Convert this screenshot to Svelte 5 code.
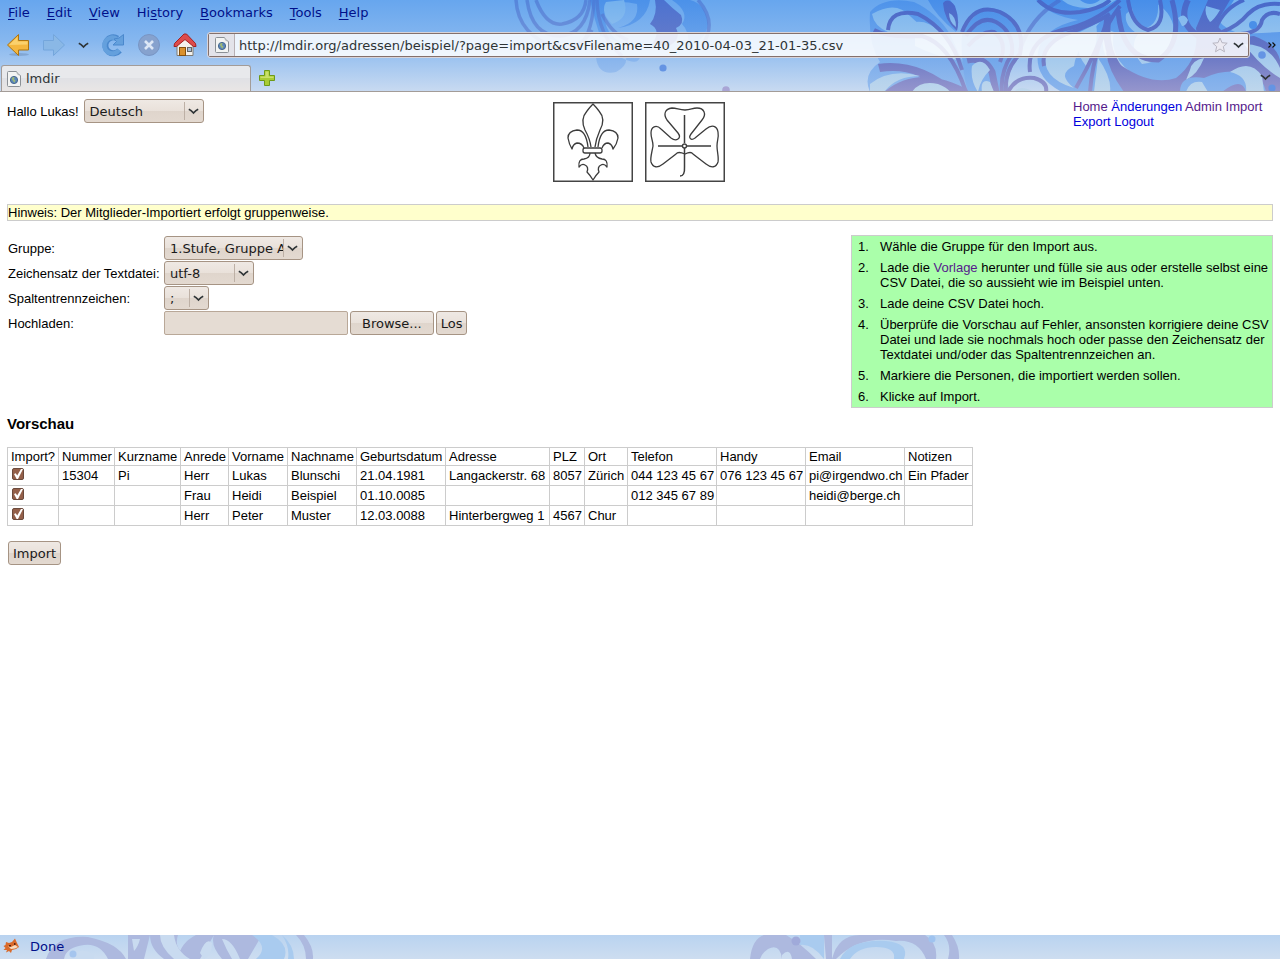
<script>
  const url = 'http://lmdir.org/adressen/beispiel/?page=import&csvFilename=40_2010-04-03_21-01-35.csv'

  // [before, access key, after]
  const menus = [
    ['', 'F', 'ile'],
    ['', 'E', 'dit'],
    ['', 'V', 'iew'],
    ['Hi', 's', 'tory'],
    ['', 'B', 'ookmarks'],
    ['', 'T', 'ools'],
    ['', 'H', 'elp'],
  ]

  const links = [
    { text: 'Home', visited: true },
    { text: 'Änderungen', visited: false },
    { text: 'Admin', visited: true },
    { text: 'Import', visited: true },
    { text: 'Export', visited: false },
    { text: 'Logout', visited: false },
  ]

  const columns = [
    { name: 'Import?', width: 51 },
    { name: 'Nummer', width: 56 },
    { name: 'Kurzname', width: 66 },
    { name: 'Anrede', width: 48 },
    { name: 'Vorname', width: 59 },
    { name: 'Nachname', width: 69 },
    { name: 'Geburtsdatum', width: 89 },
    { name: 'Adresse', width: 104 },
    { name: 'PLZ', width: 35 },
    { name: 'Ort', width: 43 },
    { name: 'Telefon', width: 89 },
    { name: 'Handy', width: 89 },
    { name: 'Email', width: 99 },
    { name: 'Notizen', width: 68 },
  ]
  const tableWidth = columns.reduce((n, c) => n + c.width, 1)

  let address = $state(url)
  let language = $state('Deutsch')
  let group = $state('1.Stufe, Gruppe A')
  let charset = $state('utf-8')
  let separator = $state(';')
  let fileName = $state('')
  let fileInput

  let people = $state([
    { on: true, cells: ['15304', 'Pi', 'Herr', 'Lukas', 'Blunschi', '21.04.1981', 'Langackerstr. 68', '8057', 'Zürich', '044 123 45 67', '076 123 45 67', 'pi@irgendwo.ch', 'Ein Pfader'] },
    { on: true, cells: ['', '', 'Frau', 'Heidi', 'Beispiel', '01.10.0085', '', '', '', '012 345 67 89', '', 'heidi@berge.ch', ''] },
    { on: true, cells: ['', '', 'Herr', 'Peter', 'Muster', '12.03.0088', 'Hinterbergweg 1', '4567', 'Chur', '', '', '', ''] },
  ])

  function pickFile() {
    fileName = fileInput.files[0]?.name ?? ''
  }
</script>

{#snippet chevron()}
  <svg class="chevron" width="11" height="7" viewBox="0 0 11 7" aria-hidden="true">
    <path d="M0.800 1.200Q3 2.200 5.500 5Q8 2.200 10.200 1.200" fill="none" stroke="#2e3436" stroke-width="1.700" />
  </svg>
{/snippet}

{#snippet pageIcon()}
  <svg width="14" height="16" viewBox="0 0 14 16" aria-hidden="true">
    <path d="M1.5 0.5H9.5L13.5 4.5V14.5Q13.5 15.5 12.5 15.5H1.5Q0.5 15.5 0.5 14.5V1.5Q0.5 0.5 1.5 0.5Z" fill="#f3f4f3" stroke="#8b9096" />
    <path d="M9.5 0.5Q9.8 4 13.5 4.5" fill="#fff" stroke="#a7abaf" />
    <circle cx="7" cy="9" r="3.6" fill="#5b87bd" stroke="#47688f" />
    <path d="M4.6 7.4Q6 5.6 7.6 6.2L7 8.2L8.6 9.4L7.4 11.8L5.8 9.8Z" fill="#9cb778" />
  </svg>
{/snippet}

<div class="browser">
  <header class="chrome">
    <svg class="ornament" viewBox="0 0 1280 92" preserveAspectRatio="xMaxYMin slice" aria-hidden="true">
      <defs>
        <linearGradient id="violet" gradientUnits="userSpaceOnUse" x1="0" y1="0" x2="0" y2="92">
          <stop offset="0" stop-color="#4769cb" />
          <stop offset="0.55" stop-color="#6474c4" />
          <stop offset="1" stop-color="#9696cd" />
        </linearGradient>
        <linearGradient id="blue" gradientUnits="userSpaceOnUse" x1="0" y1="0" x2="0" y2="92">
          <stop offset="0" stop-color="#478ee9" />
          <stop offset="1" stop-color="#8bb5ec" />
        </linearGradient>
        <linearGradient id="pale" gradientUnits="userSpaceOnUse" x1="0" y1="0" x2="0" y2="92">
          <stop offset="0" stop-color="#76b3ef" />
          <stop offset="1" stop-color="#bfd7ec" />
        </linearGradient>
      </defs>

      <!-- middle flower -->
      <g opacity="0.85">
        <path d="M590 0H650Q646 24 618 28Q640 22 637 4Q620 0 606 4Q600 30 620 42L600 36Q594 18 590 0Z" fill="url(#blue)" />
        <path d="M624 0Q630 18 612 24Q600 12 606 2Z" fill="url(#pale)" />
        <path d="M655 0H664Q672 8 681 15Q685 24 676 28Q682 40 668 46L652 44Q662 30 650 24Q658 14 655 0Z" fill="url(#violet)" />
        <path d="M672 0H690Q706 4 708 24Q706 40 688 46Q690 32 682 24Q690 12 672 0Z" fill="url(#blue)" />
        <circle cx="675" cy="19" r="4.5" fill="url(#violet)" />
        <path d="M596 57Q598 76 616 72Q628 66 626 56L640 57Q638 66 622 58Z" fill="url(#blue)" opacity="0.6" />
        <g fill="none" stroke="url(#violet)" stroke-width="3.5" opacity="0.6">
          <path d="M516 0Q518 36 558 48Q582 48 592 30" />
          <path d="M527 0Q532 36 560 36Q586 34 590 0" />
          <path d="M536 0Q546 26 562 24Q584 20 586 0" />
          <path d="M594 0Q592 40 574 50" />
          <path d="M597 0Q598 36 622 56M602 14Q612 34 628 40" />
          <path d="M698 0Q718 22 702 46" />
        </g>
      </g>
      <circle cx="663" cy="68" r="3.6" fill="#6594e3" />
      <circle cx="726" cy="90" r="3.8" fill="#a9a5d5" />

      <!-- side flower -->
      <path d="M870 12Q884 -4 914 2Q936 12 950 34L962 60Q978 92 966 92H870Q862 74 880 62Q868 44 870 12Z" fill="url(#blue)" opacity="0.8" />
      <path d="M872 14Q896 0 910 16Q922 28 934 32H888Q874 26 872 14ZM915 22Q938 18 958 60Q940 58 915 46Z" fill="url(#pale)" />
      <path d="M878 64Q920 58 958 92H940Q916 66 880 72ZM884 92Q920 62 972 92Z" fill="url(#violet)" />
      <path d="M912 92Q920 80 938 84Q948 88 950 92ZM870 84Q890 68 920 76Q896 76 884 92H870Z" fill="url(#pale)" />
      <path d="M928 0Q936 -6 950 0Q962 14 956 32Q936 16 928 0Z" fill="url(#blue)" />
      <path d="M943 3Q948 -3 955 6Q960 20 957 31Q944 20 943 3Z" fill="url(#violet)" />
      <path d="M949 13Q956 16 956 27Q949 22 949 13Z" fill="url(#pale)" />
      <path d="M962 34Q980 0 1004 12Q1028 28 1016 60Q1004 80 1010 92H968Q960 64 962 34Z" fill="url(#blue)" />
      <g fill="none" stroke="url(#violet)" stroke-width="4">
        <path d="M888 30Q890 8 918 14Q950 30 962 70" />
        <path d="M874 30Q888 38 922 36Q950 44 966 92" />
        <path d="M962 32Q974 2 1000 12Q1026 24 1020 54Q1004 70 1006 92" />
        <path d="M966 36Q980 14 996 22Q1014 32 1012 54Q1000 72 1002 92" />
        <path d="M968 46Q982 30 994 32Q1008 42 1000 62" />
        <path d="M967 60Q984 56 992 72L996 92" stroke-width="7" />
        <path d="M1008 92Q1016 76 1034 78Q1048 82 1046 92" />
      </g>
      <path d="M972 66Q982 56 990 70Q980 80 978 92Q970 80 972 66ZM982 92Q980 78 990 82L994 92ZM1014 92Q1020 84 1034 92Z" fill="url(#pale)" />

      <!-- corner flower -->
      <path d="M1036 0H1280V92H1062Q1034 78 1038 52Q1042 28 1078 20Q1050 16 1036 0Z" fill="url(#blue)" />
      <path d="M1046 0H1062Q1076 12 1106 6L1116 0H1100Q1090 8 1080 0ZM1046 52Q1056 36 1080 32L1100 22Q1076 48 1074 66Q1056 74 1074 88Q1040 78 1046 52ZM1104 28L1114 32Q1108 58 1136 76L1128 80Q1096 60 1104 28Z" fill="url(#pale)" />
      <path d="M1098 58Q1112 78 1110 92H1094ZM1078 40Q1090 34 1096 24Q1100 46 1086 66Q1076 54 1078 40Z" fill="url(#pale)" />
      <path d="M1208 0H1230L1216 24Q1226 40 1254 36Q1276 44 1280 60V92H1200Q1160 96 1124 92Q1108 70 1106 52L1122 66Q1152 86 1176 78Q1200 60 1196 28Z" fill="url(#violet)" />
      <path d="M1234 0H1280V32L1240 34Q1224 28 1220 22Z" fill="url(#pale)" />
      <path d="M1126 14Q1136 4 1150 0Q1172 10 1174 30Q1168 62 1142 64Q1128 48 1138 34Q1124 26 1126 14Z" fill="url(#pale)" />
      <path d="M1132 0H1158Q1160 26 1144 28Q1130 16 1132 0Z" fill="url(#blue)" />
      <g fill="none" stroke="url(#violet)" stroke-width="4">
        <path d="M1038 0Q1054 16 1080 12Q1102 8 1110 0" />
        <path d="M1020 50Q1030 18 1060 0" opacity="0.6" />
        <path d="M1030 72Q1026 40 1062 30Q1094 24 1120 0" />
        <path d="M1044 66Q1040 46 1066 34Q1094 24 1110 14" />
        <path d="M1090 92Q1094 40 1120 6M1076 88Q1098 50 1108 18" />
        <path d="M1108 16Q1100 70 1150 92" stroke-width="7" />
        <path d="M1118 10Q1122 60 1158 60Q1184 44 1172 0" stroke-width="5" />
        <path d="M1128 0Q1132 26 1148 30Q1166 26 1160 0" />
        <path d="M1216 28Q1224 8 1244 0M1222 32Q1238 26 1248 14Q1260 2 1280 4M1228 34Q1260 36 1262 20Q1268 10 1280 14" />
        <path d="M1188 0Q1176 24 1202 38" stroke-width="6" />
      </g>
      <path d="M1178 18Q1184 12 1188 20Q1186 26 1182 26ZM1206 6L1220 10Q1214 20 1210 22Q1204 14 1206 6ZM1190 70Q1192 60 1204 58Q1198 74 1186 80Z" fill="url(#pale)" />
      <path d="M1180 92Q1180 74 1204 78Q1222 70 1238 72Q1260 66 1266 92H1246Q1242 76 1222 92Z" fill="url(#blue)" />
      <path d="M1230 72Q1250 58 1262 76L1264 92H1246Q1248 76 1230 72ZM1186 92Q1190 80 1202 82L1208 92ZM1244 44Q1270 44 1280 68V78Q1260 66 1244 44Z" fill="url(#pale)" />
      <circle cx="1262" cy="55" r="3.8" fill="#6494e4" />
      <circle cx="1272" cy="88" r="3.6" fill="#6494e4" />
      <circle cx="1253" cy="25" r="4" fill="#4a8fe8" />
    </svg>

    <nav class="menubar" aria-label="Menu">
      {#each menus as [before, key, after]}
        <button class="menu">{before}<u>{key}</u>{after}</button>
      {/each}
    </nav>

    <div class="toolbar">
      <button class="tool" aria-label="Back">
        <svg width="24" height="24" viewBox="0 0 24 24">
          <ellipse cx="13" cy="21.500" rx="10" ry="1.500" fill="#6b8cb8" opacity="0.5" />
          <path d="M1.500 12L12.500 1.500V7.500H22.500V17H12.500V22.500Z" fill="#f4b73f" stroke="#ad7411" stroke-linejoin="round" />
          <path d="M3 12L11.500 4V8.500H21.500V11.500Z" fill="#fbd779" opacity="0.8" />
        </svg>
      </button>
      <button class="tool" aria-label="Forward">
        <svg width="24" height="24" viewBox="0 0 24 24">
          <path d="M22.500 12L11.500 1.500V7.500H1.500V17H11.500V22.500Z" fill="#8ab8e6" stroke="#74a6dc" stroke-linejoin="round" />
        </svg>
      </button>
      <button class="tool narrow" aria-label="Recent pages">{@render chevron()}</button>
      <button class="tool" aria-label="Reload">
        <svg width="24" height="24" viewBox="0 0 24 24">
          <path d="M18.500 17.500A8 8 0 1 1 16.500 5.500" fill="none" stroke="#4a88cd" stroke-width="6" />
          <path d="M18 17A8 8 0 1 1 16 6" fill="none" stroke="#64a0dd" stroke-width="4.500" />
          <path d="M22.500 1.500V12H12L15.500 8.500L13 6L18 5Z" fill="#64a0dd" stroke="#4a88cd" stroke-linejoin="round" />
        </svg>
      </button>
      <button class="tool" aria-label="Stop">
        <svg width="24" height="24" viewBox="0 0 24 24">
          <circle cx="12" cy="12" r="10.500" fill="#86a2ce" stroke="#7895c4" />
          <path d="M8 8L16 16M16 8L8 16" stroke="#dce7f6" stroke-width="2.600" />
        </svg>
      </button>
      <button class="tool" aria-label="Home">
        <svg width="24" height="24" viewBox="0 0 24 24">
          <path d="M4 12L12 4L20 12V22.500H4Z" fill="#f3f1ec" stroke="#7d7b74" />
          <rect x="6.500" y="14.500" width="6" height="8" fill="#d9912e" stroke="#85500d" />
          <rect x="14.500" y="14.500" width="4" height="4" fill="#a9bfd6" stroke="#666" />
          <path d="M1 13.500L1.500 10.500L11 1H13.500L22.500 10.500L23 13.500H20.500L12 6.500L3.500 13.500Z" fill="#dd4b4b" stroke="#a52020" stroke-linejoin="round" />
        </svg>
      </button>
      <div class="location">
        <span class="site">{@render pageIcon()}</span>
        <input class="address" aria-label="Location" bind:value={address} />
        <button class="inbar" aria-label="Bookmark this page">
          <svg width="16" height="16" viewBox="0 0 16 16">
            <path d="M8 1L10 5.700L15.200 6.200L11.300 9.600L12.500 14.800L8 12L3.500 14.800L4.700 9.600L0.800 6.200L6 5.700Z" fill="#eceaf2" stroke="#b8b6c2" stroke-linejoin="round" />
          </svg>
        </button>
        <button class="inbar" aria-label="Show history">{@render chevron()}</button>
      </div>
      <button class="more" aria-label="More tools">
        <svg width="8" height="6" viewBox="0 0 8 6">
          <path d="M0.500 0.500L3 3L0.500 5.500M4.500 0.500L7 3L4.500 5.500" fill="none" stroke="#111" stroke-width="1.200" />
        </svg>
      </button>
    </div>

    <div class="tabs">
      <button class="tab">{@render pageIcon()}<span>lmdir</span></button>
      <button class="newtab" aria-label="New tab">
        <svg width="16" height="16" viewBox="0 0 16 16">
          <path d="M5.500 0.500H10.500V5.500H15.500V10.500H10.500V15.500H5.500V10.500H0.500V5.500H5.500Z" fill="#a9cc35" stroke="#6d9a18" stroke-linejoin="round" />
          <path d="M6.500 1.500H9.500V6.500H14.500V8H1.500V6.500H6.500Z" fill="#c9e069" />
        </svg>
      </button>
      <button class="alltabs" aria-label="List all tabs">{@render chevron()}</button>
    </div>
  </header>

  <main class="page">
    <div class="top">
      <div class="hello">
        <label for="language">Hallo Lukas!</label>
        <span class="select">
          <select id="language" class="w-language" bind:value={language}>
            <option>Deutsch</option>
          </select>
          <span class="arrow">{@render chevron()}</span>
        </span>
      </div>
      <div class="logos">
        <svg width="80" height="80" viewBox="0 0 80 80" role="img" aria-label="Lilie">
          <rect x="0.750" y="0.750" width="78.500" height="78.500" fill="#fff" stroke="#444" stroke-width="1.500" />
          <g fill="none" stroke="#3c3c3c" stroke-width="1.300" stroke-linejoin="round">
            <path d="M38 45Q37 37 32 28Q27 17 34 9Q37 5 40 2Q43 5 46 9Q53 17 47 28Q43 37 42 45" />
            <path d="M35 45Q33 28 24 28Q15 29 15 36Q16 42 19 47Q20 42 24 41Q29 41 31 46" />
            <path d="M45 45Q47 28 56 28Q65 29 65 36Q64 42 60 47Q59 42 55 41Q51 41 49 46" />
            <path d="M32 46H47Q49 46 49 48V49Q49 51 47 51H32Q30 51 30 49V48Q30 46 32 46Z" />
            <path d="M37 51Q37 56 31 57Q25 57 26 65Q29 61 32 63Q36 65 34 70Q37 73 40 78Q43 73 46 70Q44 65 48 63Q51 61 54 65Q55 57 49 57Q43 56 42 51" />
          </g>
        </svg>
        <svg width="80" height="80" viewBox="0 0 80 80" role="img" aria-label="Kleeblatt">
          <rect x="0.750" y="0.750" width="78.500" height="78.500" fill="#fff" stroke="#444" stroke-width="1.500" />
          <g fill="none" stroke="#3c3c3c" stroke-width="1.300">
            <path d="M33 37Q30 39 26 36L16 27C11 22 6 25 6 31C6 37 8 38 8 44C7 50 5 56 6 60C8 66 13 66 18 62L31 52Q33 49 40 52Q46 49 48 52L61 62C66 66 71 66 73 60C74 55 72 50 72 44C72 38 74 36 73 30C72 24 67 22 61 27L50 36C46 39 43 36 46 32L57 18C62 12 59 6 52 6C47 6 46 8 40 8C34 8 32 6 27 6C20 7 18 12 22 18L33 31Q36 35 33 37Z" />
            <path d="M39.500 13V41M13 44H37M42 44H66M39.500 46V65Q40 74 35 74" stroke-width="1.500" />
            <circle cx="39.500" cy="44" r="2" />
          </g>
        </svg>
      </div>
      <nav class="links" aria-label="Navigation">
        {#each links as link}
          <a href="#top" class:visited={link.visited}>{link.text}</a>{' '}
        {/each}
      </nav>
    </div>

    <p class="notice">Hinweis: Der Mitglieder-Importiert erfolgt gruppenweise.</p>

    <div class="setup">
      <form class="settings" onsubmit={(e) => e.preventDefault()}>
        <label for="group">Gruppe:</label>
        <span class="select">
          <select id="group" class="w-group" bind:value={group}>
            <option>1.Stufe, Gruppe A</option>
          </select>
          <span class="arrow">{@render chevron()}</span>
        </span>

        <label for="charset">Zeichensatz der Textdatei:</label>
        <span class="select">
          <select id="charset" class="w-charset" bind:value={charset}>
            <option>utf-8</option>
          </select>
          <span class="arrow">{@render chevron()}</span>
        </span>

        <label for="separator">Spaltentrennzeichen:</label>
        <span class="select">
          <select id="separator" class="w-separator" bind:value={separator}>
            <option>;</option>
          </select>
          <span class="arrow">{@render chevron()}</span>
        </span>

        <label for="filename">Hochladen:</label>
        <span class="upload">
          <input id="filename" class="filename" readonly value={fileName} />
          <input type="file" hidden bind:this={fileInput} onchange={pickFile} />
          <button type="button" class="btn wide" onclick={() => fileInput.click()}>Browse...</button>
          <button class="btn">Los</button>
        </span>
      </form>

      <ol class="steps">
        <li><span>Wähle die Gruppe für den Import aus.</span></li>
        <li><span>Lade die <a href="#vorlage" class="visited">Vorlage</a> herunter und fülle sie aus oder erstelle selbst eine CSV Datei, die so aussieht wie im Beispiel unten.</span></li>
        <li><span>Lade deine CSV Datei hoch.</span></li>
        <li><span>Überprüfe die Vorschau auf Fehler, ansonsten korrigiere deine CSV Datei und lade sie nochmals hoch oder passe den Zeichensatz der Textdatei und/oder das Spaltentrennzeichen an.</span></li>
        <li><span>Markiere die Personen, die importiert werden sollen.</span></li>
        <li><span>Klicke auf Import.</span></li>
      </ol>
    </div>

    <h2>Vorschau</h2>

    <table style="width: {tableWidth}px">
      <thead>
        <tr>
          {#each columns as column}
            <th style="width: {column.width}px">{column.name}</th>
          {/each}
        </tr>
      </thead>
      <tbody>
        {#each people as person}
          <tr>
            <td class="tick"><input type="checkbox" aria-label="Import?" bind:checked={person.on} /></td>
            {#each person.cells as cell}
              <td>{cell}</td>
            {/each}
          </tr>
        {/each}
      </tbody>
    </table>

    <div class="actions">
      <button class="btn">Import</button>
    </div>
  </main>

  <footer class="status">
    <svg class="ornament" viewBox="0 0 1280 24" preserveAspectRatio="xMinYMin slice" aria-hidden="true">
      <path d="M46 24Q54 0 88 2Q118 8 126 24H108Q100 8 84 10Q66 12 64 24ZM128 0H150L144 24H128ZM150 0H178Q172 18 196 22L192 24H164Q150 14 150 0ZM178 24Q180 8 196 0H214L200 24ZM214 0H262L248 24H222Q210 10 214 0ZM296 0H304Q314 12 313 24H306Q306 10 296 0Z" fill="#adb9df" />
      <path d="M252 0H272Q290 10 284 24H256Q270 12 252 0ZM282 0Q294 10 294 24H288Q290 12 282 0Z" fill="#a9cbef" />
      <path d="M132 4H140Q138 12 134 16ZM160 0H174Q176 16 190 24H174Q160 12 160 0ZM200 18Q206 2 212 8Q212 20 204 24ZM222 4Q232 4 240 24H232Q226 14 222 4ZM70 24Q78 10 94 20V24Z" fill="#c9dbf0" />
      <circle cx="73" cy="19" r="3.500" fill="#a5c5ee" />
      <path d="M750 24Q752 4 764 0H786Q800 8 816 24H792Q790 12 782 20V24Q780 8 768 14Q762 18 760 24ZM832 24Q838 0 860 0H925Q938 8 936 24H926Q918 4 896 6Q860 0 836 24ZM944 0H952Q960 12 959 24H948Q952 10 944 0ZM824 0H832V24H826Z" fill="#adb9df" />
      <path d="M800 0H824V24Q812 8 800 10ZM840 24Q850 4 886 6Q910 8 904 24H894Q896 12 876 12Q858 12 850 24Z" fill="#a9cbef" />
      <circle cx="796" cy="6" r="4.500" fill="#a0aada" />
      <circle cx="932" cy="4" r="3.500" fill="#9fc3ef" />
    </svg>
    <svg class="fox" width="16" height="16" viewBox="0 0 16 16" aria-hidden="true">
      <path d="M3 4L6 5L9 4L12 0.500L14 5L16 9L13 11L9 12L8 15L6 13L3 14.500L4 12L0.500 12L2.500 10L0.500 8L2.500 7Z" fill="#d96a2b" />
      <path d="M5 8L8 9L12 7L15 9L12 10.500L8 11Z" fill="#f6dcc0" />
      <path d="M6 7H8V8.500H6ZM11 5H12.500V7H11Z" fill="#5b2410" />
    </svg>
    <span>Done</span>
  </footer>
</div>

<style>
  :global(body) {
    margin: 0;
    background: #fff;
  }
  .browser {
    min-height: 100vh;
    display: flex;
    flex-direction: column;
    font-family: "DejaVu Sans", sans-serif;
    font-size: 13px;
    color: #000;
  }
  button {
    font: inherit;
    color: inherit;
    padding: 0;
    border: 0;
    background: none;
  }
  svg {
    display: block;
  }

  /* window chrome */
  .chrome {
    position: relative;
    background: linear-gradient(#67a6ee, #86b7ef 45%, #c8daf1);
    border-bottom: 1px solid #a39c98;
  }
  .ornament {
    position: absolute;
    inset: 0;
    width: 100%;
    height: 100%;
  }
  .menubar, .toolbar, .tabs {
    position: relative;
    display: flex;
    align-items: center;
  }
  .menubar {
    height: 26px;
    gap: 17px;
    padding: 0 8px;
    color: #00108a;
  }
  .menu {
    line-height: 24px;
  }
  .menu u {
    text-underline-offset: 2px;
  }
  .toolbar {
    height: 38px;
    gap: 12px;
    padding: 0 4px 0 6px;
  }
  .location {
    flex: 1;
    display: flex;
    align-items: center;
    gap: 8px;
    height: 22px;
    margin-left: -1px;
    padding-right: 4px;
    border: 1px solid #84706c;
    outline: 1px solid #d8d4da;
    border-radius: 2px;
    background: rgba(255, 255, 255, .85);
  }
  .site {
    align-self: stretch;
    display: flex;
    align-items: center;
    padding: 0 5px 0 6px;
    border-right: 1px solid #b8b0b4;
    background: #e3e3ea;
  }
  .address {
    flex: 1;
    min-width: 0;
    margin-left: -4px;
    padding: 0;
    border: 0;
    outline: 0;
    background: none;
    font: inherit;
    color: #2e3436;
  }
  .inbar + .inbar {
    margin-left: -3px;
  }
  .more {
    padding-left: 7px;
  }
  .tabs {
    height: 27px;
    padding: 0 9px 0 1px;
  }
  .tab {
    display: flex;
    align-items: center;
    gap: 5px;
    align-self: flex-end;
    width: 250px;
    height: 26px;
    padding: 0 5px;
    border: 1px solid #a39c98;
    border-bottom: 0;
    border-radius: 3px 3px 0 0;
    background: linear-gradient(#e8e9ec 50%, #e0e1e5 50%, #e9e6e5);
    color: #2e3436;
  }
  .newtab {
    margin: 0 auto 0 8px;
  }

  /* page */
  .page {
    flex: 1;
    padding: 7px;
    font-family: "Liberation Sans", Arial, sans-serif;
    line-height: 15px;
  }
  a {
    color: #00d;
    text-decoration: none;
  }
  a.visited {
    color: #551a8b;
  }
  .top {
    display: grid;
    grid-template-columns: 1fr auto 1fr;
    align-items: start;
  }
  .hello {
    display: flex;
    align-items: center;
    gap: 5px;
  }
  .logos {
    display: flex;
    gap: 12px;
    padding: 3px 2px 0 0;
  }
  .links {
    justify-self: end;
    width: 200px;
  }
  .notice {
    margin: 22px 0 14px;
    border: 1px solid #ccc;
    background: #ffc;
  }
  .setup {
    display: flex;
    justify-content: space-between;
    align-items: start;
  }
  .settings {
    display: grid;
    grid-template-columns: 155px auto;
    grid-auto-rows: 24px;
    align-items: center;
    gap: 1px;
    padding: 1px;
  }
  .select {
    display: inline-grid;
    justify-self: start;
    font-family: "DejaVu Sans", sans-serif;
  }
  .select > * {
    grid-area: 1 / 1;
  }
  select, .btn {
    height: 24px;
    border: 1px solid #a69484;
    border-radius: 3px;
    background: linear-gradient(#efe9e4, #e9e1da 50%, #dfd5cc 50%, #e3d9d0);
    font-family: "DejaVu Sans", sans-serif;
    font-size: 13px;
    color: #1a1a1a;
  }
  select {
    appearance: none;
    padding: 0 18px 0 5px;
  }
  .w-language {
    width: 120px;
  }
  .w-group {
    width: 139px;
  }
  .w-charset {
    width: 90px;
  }
  .w-separator {
    width: 45px;
  }
  .arrow {
    justify-self: end;
    align-self: center;
    display: flex;
    align-items: center;
    height: 18px;
    padding: 0 5px 0 3px;
    border-left: 1px solid #bdb0a5;
    pointer-events: none;
  }
  .upload {
    display: flex;
    gap: 2px;
  }
  .filename {
    box-sizing: border-box;
    width: 184px;
    height: 24px;
    border: 1px solid #b9a898;
    border-radius: 2px;
    background: #e5dcd3;
  }
  .btn {
    padding: 0 4px;
  }
  .btn.wide {
    padding: 0 11px;
  }
  .steps {
    box-sizing: border-box;
    width: 422px;
    margin: 0;
    padding: 3px 2px 3px 6px;
    border: 1px solid #ccc;
    background: #afa;
    list-style: none;
    counter-reset: step;
  }
  .steps li {
    display: grid;
    grid-template-columns: 22px 1fr;
    counter-increment: step;
  }
  .steps li + li {
    margin-top: 6px;
  }
  .steps li::before {
    content: counter(step) ".";
  }
  h2 {
    margin: 7px 0 15px;
    font-size: 15px;
    line-height: 17px;
  }
  table {
    table-layout: fixed;
    border-collapse: collapse;
  }
  th, td {
    box-sizing: border-box;
    height: 18px;
    padding: 1px 0 1px 3px;
    border: 1px solid #ccc;
    font-weight: normal;
    text-align: left;
    white-space: nowrap;
  }
  td {
    height: 20px;
  }
  .tick {
    vertical-align: top;
  }
  .actions {
    padding: 15px 1px;
  }
  input[type="checkbox"] {
    display: block;
    appearance: none;
    box-sizing: border-box;
    width: 12px;
    height: 12px;
    margin: 1px;
    border: 1px solid #6b4a3c;
    border-radius: 2px;
    background: #fff;
  }
  input[type="checkbox"]:checked {
    background: #94604a;
  }
  input[type="checkbox"]:checked::after {
    content: "";
    display: block;
    width: 10px;
    height: 10px;
    background: #fff;
    clip-path: polygon(10% 50%, 28% 42%, 42% 65%, 80% 0, 100% 0, 50% 100%, 36% 100%);
  }

  .status {
    position: relative;
    display: flex;
    align-items: center;
    gap: 11px;
    height: 22px;
    padding: 0 0 2px 3px;
    background: linear-gradient(#b9d3f0, #cdddf0);
    color: #00108a;
  }
  .status span, .fox {
    position: relative;
  }
</style>
